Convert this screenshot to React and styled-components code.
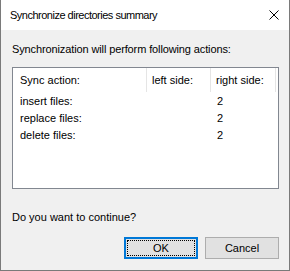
import React from "react";
import styled, { createGlobalStyle } from "styled-components";

const Global = createGlobalStyle`
  html, body { margin: 0; padding: 0; background: #f0f0f0; }
  * { box-sizing: border-box; }
  body { font-family: "Liberation Sans", Arial, sans-serif; font-size: 11px; color: #000; }
`;

const Window = styled.div`
  width: 290px;
  height: 271px;
  display: flex;
  flex-direction: column;
  background: #f0f0f0;
  border: 1px solid #7a7a7a;
  border-top: none;
`;

const TitleBar = styled.div`
  height: 30px;
  flex: none;
  background: #fff;
  display: flex;
  align-items: center;
  justify-content: space-between;
  padding: 0 10px 0 9px;
  font-size: 11px;
`;

const Title = styled.span`
  line-height: 16px;
  padding-bottom: 1px;
  letter-spacing: -0.5px;
`;

const Close = styled.span`
  width: 10px;
  height: 10px;
  display: flex;
`;

const Body = styled.div`
  flex: 1;
  display: flex;
  flex-direction: column;
  padding: 11px 10px 0 11px;
`;

const Message = styled.div`
  line-height: 16px;
  height: 16px;
  letter-spacing: -0.12px;
`;

const ListBox = styled.div`
  margin-top: 10px;
  height: 122px;
  background: #fff;
  border: 1px solid #828790;
  display: flex;
  flex-direction: column;
`;

const Grid = styled.div`
  display: grid;
  grid-template-columns: 134px 64px 65px;
`;

const HeaderCell = styled.div`
  height: 24px;
  display: flex;
  align-items: center;
  padding-left: ${(p) => p.$pad}px;
  padding-bottom: 1px;
  border-right: 1px solid #e5e5e5;
  white-space: nowrap;
`;

const Cell = styled.div`
  height: 17px;
  line-height: 17px;
  padding-left: ${(p) => p.$pad}px;
  white-space: nowrap;
`;

const Rows = styled(Grid)`
  margin-top: 1px;
`;

const Question = styled.div`
  margin-top: 20px;
  line-height: 16px;
  height: 16px;
`;

const Buttons = styled.div`
  margin-top: 12px;
  display: flex;
  justify-content: flex-end;
  gap: 7px;
`;

const Button = styled.button`
  width: 74px;
  height: 22px;
  padding: 0;
  font-family: inherit;
  font-size: 11px;
  color: #000;
  background: #e1e1e1;
  border: ${(p) => (p.$default ? "2px solid #0078d7" : "1px solid #adadad")};
  outline: ${(p) => (p.$default ? "1px dotted #000" : "none")};
  outline-offset: -4px;
  display: flex;
  align-items: center;
  justify-content: center;
`;

const rows = [
  ["insert files:", "", "2"],
  ["replace files:", "", "2"],
  ["delete files:", "", "2"],
];

export default function App() {
  return (
    <>
      <Global />
      <Window>
        <TitleBar>
          <Title>Synchronize directories summary</Title>
          <Close>
            <svg width="10" height="10" viewBox="0 0 10 10">
              <path d="M0.5 0.5 L9.5 9.5 M9.5 0.5 L0.5 9.5" stroke="#000" strokeWidth="1" fill="none" />
            </svg>
          </Close>
        </TitleBar>
        <Body>
          <Message>Synchronization will perform following actions:</Message>
          <ListBox>
            <Grid>
              <HeaderCell $pad={7}>Sync action:</HeaderCell>
              <HeaderCell $pad={5}>left side:</HeaderCell>
              <HeaderCell $pad={5}>right side:</HeaderCell>
            </Grid>
            <Rows>
              {rows.map((r, i) => (
                <React.Fragment key={i}>
                  <Cell $pad={7}>{r[0]}</Cell>
                  <Cell $pad={5}>{r[1]}</Cell>
                  <Cell $pad={6}>{r[2]}</Cell>
                </React.Fragment>
              ))}
            </Rows>
          </ListBox>
          <Question>Do you want to continue?</Question>
          <Buttons>
            <Button $default>OK</Button>
            <Button>Cancel</Button>
          </Buttons>
        </Body>
      </Window>
    </>
  );
}
